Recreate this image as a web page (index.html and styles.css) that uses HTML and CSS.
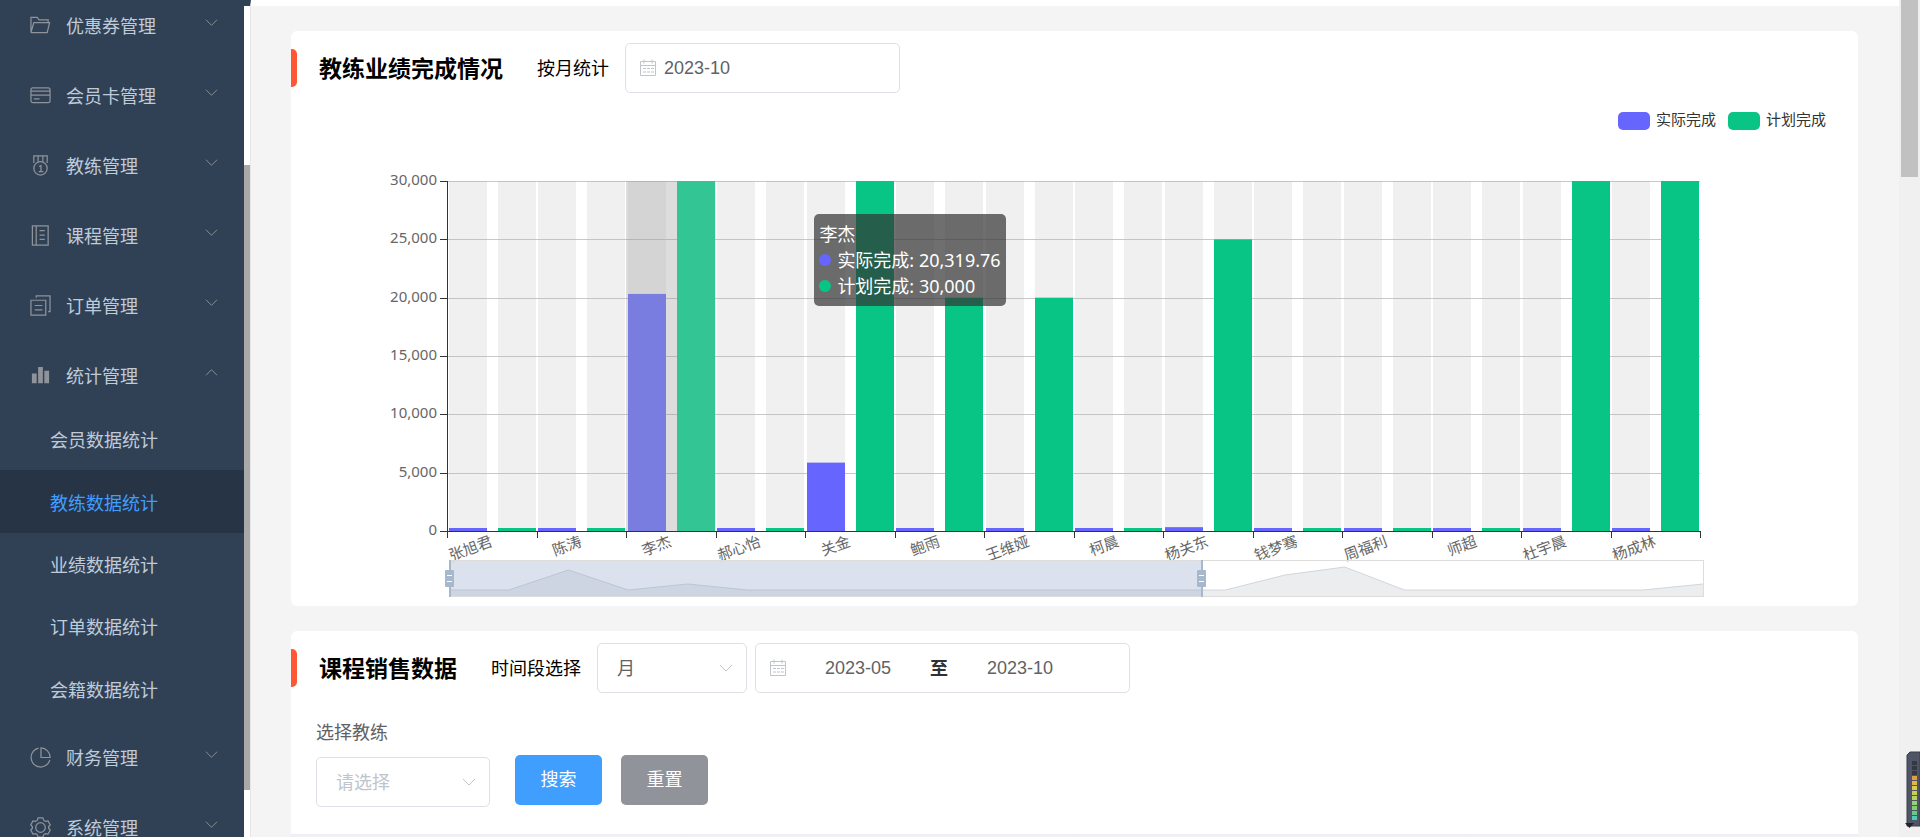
FILE: index.html
```html
<!DOCTYPE html>
<html lang="zh-CN">
<head>
<meta charset="utf-8">
<title>教练数据统计</title>
<link rel="stylesheet" href="styles.css">
</head>
<body>
<svg class="sprite" aria-hidden="true">
  <symbol id="down" viewBox="0 0 14 14"><path d="M1 4l6 6 6-6"/></symbol>
  <symbol id="up" viewBox="0 0 14 14"><path d="M1 10l6-6 6 6"/></symbol>
  <symbol id="calendar" viewBox="0 0 18 18"><path d="M1.500 2.500h15v14h-15zM1.500 6.500h15M5 .5v4M13 .5v4"/><path stroke-dasharray="3 1" d="M4 9.500h11M4 13h11"/></symbol>
</svg>
<div class="app">
  <aside class="sidebar">
    <nav class="menu">
      <a class="item" href="#"><svg class="icon" viewBox="0 0 22 22"><path d="M1 18.500V2.500h6.500l2 2.500h9.500v3M1 18.500h17l2.500-10.500h-16.500L1.300 17.500"/></svg>优惠券管理<svg class="arrow"><use href="#down"/></svg></a>
      <a class="item" href="#"><svg class="icon" viewBox="0 0 22 22"><rect x="1" y="3" width="20" height="15.500" rx="2"/><path d="M1 6.500h20M1 10.500h20M4 14.500h6"/></svg>会员卡管理<svg class="arrow"><use href="#down"/></svg></a>
      <a class="item" href="#"><svg class="icon" viewBox="0 0 22 22"><circle cx="11" cy="14" r="7"/><path d="M4 8.500V1h14v7.500M8.500 1v6M13.500 1v6M9.500 12l2-1v6M9 17.300h5"/></svg>教练管理<svg class="arrow"><use href="#down"/></svg></a>
      <a class="item" href="#"><svg class="icon" viewBox="0 0 22 22"><path d="M2.500 1h16.500v20H2.500zM6.500 1v20M10 6h5.500M10 10.500h5.500M10 15h5.500"/></svg>课程管理<svg class="arrow"><use href="#down"/></svg></a>
      <a class="item" href="#"><svg class="icon" viewBox="0 0 22 22"><path d="M1 5.500h15.500V21H1zM5 11h8M5 15.500h8M6.500 3V1H21v16.500h-2"/></svg>订单管理<svg class="arrow"><use href="#down"/></svg></a>
      <a class="item" href="#"><svg class="icon solid" viewBox="0 0 22 22"><path d="M2 9h5v10H2zM8.500 2h5v17h-5zM15 6h5v13h-5z"/></svg>统计管理<svg class="arrow"><use href="#up"/></svg></a>
      <div class="submenu">
        <a href="#">会员数据统计</a>
        <a class="active" href="#">教练数据统计</a>
        <a href="#">业绩数据统计</a>
        <a href="#">订单数据统计</a>
        <a href="#">会籍数据统计</a>
      </div>
      <a class="item" href="#"><svg class="icon" viewBox="0 0 22 22"><path d="M9 1.200A10 10 0 1 0 20.800 13.500M11.500 1v10H21A9.700 9.700 0 0 0 11.500 1z"/></svg>财务管理<svg class="arrow"><use href="#down"/></svg></a>
      <a class="item" href="#"><svg class="icon" viewBox="0 0 22 22"><circle cx="11" cy="11" r="5"/><path d="M8.500 1h5l1 2.600 1.600 1 2.800-.5 2.300 4.200-1.700 2v1.400l1.700 2-2.300 4.200-2.800-.5-1.600 1-1 2.600h-5l-1-2.600-1.600-1-2.800.5L.8 13.700l1.700-2v-1.400l-1.700-2L3.100 4.100l2.800.5 1.600-1z"/></svg>系统管理<svg class="arrow"><use href="#down"/></svg></a>
    </nav>
    <div class="side-track"><div class="side-thumb"></div></div>
  </aside>

  <main class="main">
    <section class="card">
      <header class="head">
        <h2>教练业绩完成情况</h2>
        <label for="month">按月统计</label>
        <div class="field month">
          <svg class="cal"><use href="#calendar"/></svg>
          <input id="month" type="text" value="2023-10">
        </div>
      </header>
      <div class="chart">
        <svg id="chart" viewBox="0 0 1567 513" role="img" aria-label="教练业绩完成情况"></svg>
        <div class="tooltip">
          <div>李杰</div>
          <div class="row"><i class="dot actual"></i>实际完成: 20,319.76</div>
          <div class="row"><i class="dot plan"></i>计划完成: 30,000</div>
        </div>
      </div>
    </section>

    <section class="card">
      <header class="head">
        <h2>课程销售数据</h2>
        <label for="period">时间段选择</label>
        <div class="select period">
          <select id="period"><option>月</option></select>
          <svg class="caret"><use href="#down"/></svg>
        </div>
        <div class="field range">
          <svg class="cal"><use href="#calendar"/></svg>
          <input type="text" value="2023-05" aria-label="开始月份">
          <b>至</b>
          <input type="text" value="2023-10" aria-label="结束月份">
        </div>
      </header>
      <form class="filter">
        <label for="coach">选择教练</label>
        <div class="controls">
          <div class="select coach">
            <select id="coach"><option>请选择</option></select>
            <svg class="caret"><use href="#down"/></svg>
          </div>
          <button class="btn primary" type="button">搜索</button>
          <button class="btn" type="button">重置</button>
        </div>
      </form>
      <table class="table"><thead><tr><th></th><th></th><th></th><th></th></tr></thead></table>
    </section>
  </main>

  <div class="page-track"><div class="page-thumb"></div></div>
</div>
<svg class="meter" width="15" height="77" viewBox="0 0 15 77" id="meter" aria-hidden="true"></svg>
<script src="script.js"></script>
</body>
</html>
```
FILE: styles.css
```css
* { box-sizing: border-box; }
body {
  margin: 0;
  height: 100vh;
  overflow: hidden;
  background: #f4f4f4;
  color: #000;
  font: 18px/26px "Noto Sans", "Noto Sans CJK SC", sans-serif;
}
.sprite { display: none; }
svg { fill: none; stroke: currentColor; }
input, select, button { font: inherit; color: inherit; margin: 0; }

.app { display: flex; height: 100vh; }

/* sidebar */
.sidebar {
  display: flex;
  flex: none;
  width: 251px;
  background: #304156;
  border-right: 1px solid #e6e6e6;
  border-top: 6px solid #304156;
  overflow: hidden;
}
.menu { flex: 1; margin-top: -18px; }
.menu a { color: #bfcbd9; text-decoration: none; }
.item {
  display: flex;
  align-items: center;
  height: 70px;
  padding: 5px 26px 0 30px;
}
.icon { width: 21px; height: 21px; margin-right: 15px; color: #909399; stroke-width: 1.3; }
.solid { fill: currentColor; stroke: none; }
.arrow { width: 13px; height: 13px; margin: 0 0 7px auto; color: #909399; }
.submenu { display: grid; grid-auto-rows: 1fr; height: 312px; }
.submenu a { display: flex; align-items: center; padding: 2px 0 0 50px; }
.submenu .active { background: #273445; color: #409eff; }
.side-track { width: 6px; background: #fff; }
.side-thumb { height: 625px; margin-top: 159px; background: #a9a9a9; }

/* content */
.main {
  flex: 1;
  min-width: 0;
  border-top: 6px solid #fff;
  padding: 25px 41px 0 40px;
  overflow: hidden;
}
.card { background: #fff; border-radius: 6px; padding-top: 12px; margin-bottom: 25px; overflow: hidden; }
.head { display: flex; align-items: center; height: 50px; }
.head::before {
  content: "";
  width: 6px;
  height: 38px;
  margin-right: 22px;
  background: #ff5733;
  border-radius: 0 5px 5px 0;
}
.head h2 { margin: 0 34px 0 0; font-size: 23px; font-weight: 700; }
.head label { margin-right: 16px; }
.field, .select { height: 50px; background: #fff; border: 1px solid #dcdfe6; border-radius: 5px; color: #606266; }
.field { display: flex; align-items: center; padding: 0 13px; }
.field input { border: 0; padding: 0; outline: 0; background: none; font-family: "Liberation Sans", sans-serif; min-width: 0; }
.cal { width: 18px; height: 18px; color: #c0c4cc; }
.month { width: 275px; }
.month input { width: 200px; margin-left: 7px; }
.range { width: 375px; margin-left: 8px; }
.range input { width: 142px; text-align: center; }
.range b { width: 20px; text-align: center; color: #303133; }
.select { position: relative; }
.select select { width: 100%; height: 100%; padding: 0 19px; border: 0; background: none; appearance: none; outline: 0; }
.caret { position: absolute; right: 13px; top: 17px; width: 14px; height: 14px; color: #c0c4cc; pointer-events: none; }
.period { width: 150px; }
.coach { width: 174px; color: #c0c4cc; margin: 2px 25px 0 0; }

.filter { padding: 26px 25px 27px; }
.filter label { display: block; color: #606266; }
.controls { display: flex; align-items: flex-start; padding-top: 10px; }
.btn {
  width: 87px;
  height: 50px;
  margin-right: 19px;
  padding: 0 0 3px;
  border: 0;
  border-radius: 5px;
  background: #909399;
  color: #fff;
}
.primary { background: #409eff; }
.table { width: 100%; border-collapse: collapse; table-layout: fixed; }
.table th { height: 60px; background: #f2f2f4; border: 1px solid #ebeef5; }

/* chart */
.chart { position: relative; }
.chart svg { display: block; width: 100%; stroke: none; }
.chart text { font-size: 15px; fill: #666; }
.chart .legend { fill: #333; }
.tooltip {
  position: absolute;
  left: 33.4%;
  top: 121px;
  padding: 7px 5px;
  border-radius: 5px;
  background: rgba(50, 50, 50, .7);
  color: #fff;
  white-space: nowrap;
}
.row { display: flex; align-items: center; }
.dot { width: 12px; height: 12px; margin-right: 6px; border-radius: 50%; }
.actual { background: #6666ff; }
.plan { background: #09c585; }

.page-track { width: 21px; padding: 0 2px; background: #f0f0f0; }
.page-thumb { height: 177px; background: #c1c1c1; }
.meter { position: absolute; right: 0; bottom: 9px; stroke: none; }
```
FILE: script.js
```js
const NS = 'http://www.w3.org/2000/svg';
const add = (root, tag, attrs, text) => {
  const el = document.createElementNS(NS, tag);
  for (const k in attrs) el.setAttribute(k, attrs[k]);
  if (text) el.textContent = text;
  root.appendChild(el);
};

const coaches = [
  ['张旭君', 0, 0], ['陈涛', 0, 0], ['李杰', 20319.76, 30000], ['郝心怡', 0, 0],
  ['关金', 5860, 30000], ['鲍雨', 0, 20000], ['王维娅', 0, 20000], ['柯晨', 0, 0],
  ['杨关东', 330, 25000], ['钱梦骞', 0, 0], ['周福利', 0, 0], ['师超', 0, 0],
  ['杜宇晨', 0, 30000], ['杨成林', 0, 30000]
];
const svg = document.getElementById('chart');
const plot = { left: 156, top: 88, width: 1253, height: 350 };
const base = plot.top + plot.height;
const band = plot.width / coaches.length;
const barWidth = 38;
const rect = (x, y, width, height, fill, rx = 0) => add(svg, 'rect', { x, y, width, height, fill, rx });

[['实际完成', '#6666ff', 1327], ['计划完成', '#09c585', 1437]].forEach(([name, color, x]) => {
  rect(x, 19, 32, 18, color, 5);
  add(svg, 'text', { x: x + 38, y: 32, class: 'legend' }, name);
});

for (let v = 0; v <= 30000; v += 5000) {
  const y = Math.round(base - v / 30000 * plot.height);
  if (v) rect(plot.left, y, plot.width, 1, '#c8c8c8');
  rect(plot.left - 7, y, 7, 1, '#333');
  add(svg, 'text', { x: 146, y: y + 4, 'text-anchor': 'end' }, v.toLocaleString('en-US'));
}

coaches.forEach(([name, actual, plan], i) => {
  const x = plot.left + i * band;
  const hovered = name === '李杰';
  if (hovered) rect(x, plot.top, band, plot.height, 'rgba(150,150,150,.32)');
  [[actual, hovered ? '#797ddf' : '#6666ff', 2], [plan, hovered ? '#33c594' : '#09c585', 51]].forEach(([value, color, dx]) => {
    const h = Math.max(3, value / 30000 * plot.height);
    const left = Math.floor(x + dx);
    rect(left, plot.top, barWidth, plot.height, 'rgba(180,180,180,.2)');
    rect(left, base - h, barWidth, h, color);
  });
  const cx = x + band / 2;
  add(svg, 'text', { x: cx, y: 453, 'text-anchor': 'end', transform: `rotate(-20 ${cx} 448)` }, name);
});
for (let i = 0; i <= coaches.length; i++) rect(Math.round(plot.left + i * band), base, 1, 7, '#333');
rect(plot.left, plot.top, 1, plot.height, '#333');
rect(plot.left, base, plot.width, 1, '#333');

/* range slider under the chart */
const zoom = { x: 158, y: 467, w: 1254, h: 37, selected: 752 };
const levels = { 2: 477, 4: 491, 14: 482, 15: 474, 21: 491 };
const points = Array.from({ length: 22 }, (_, i) => `${zoom.x + i * zoom.w / 21},${levels[i] || 497}`).join(' ');
add(svg, 'polygon', { points: `${zoom.x},504 ${points} ${zoom.x + zoom.w},504`, fill: '#ecedef' });
add(svg, 'polyline', { points, fill: 'none', stroke: '#d2d6da' });
rect(zoom.x, zoom.y, zoom.selected, zoom.h, 'rgba(135,160,195,.3)');
add(svg, 'rect', { x: zoom.x + .5, y: zoom.y + .5, width: zoom.w, height: zoom.h - 1, fill: 'none', stroke: '#dddddd' });
[zoom.x, zoom.x + zoom.selected].forEach(x => {
  rect(x, zoom.y, 2, zoom.h, '#a7b7cc');
  rect(x - 4, 477, 9, 17, '#a7b7cc', 1);
  rect(x - 2, 482, 5, 1, '#fff');
  rect(x - 2, 488, 5, 1, '#fff');
});

const meter = document.getElementById('meter');
add(meter, 'path', { d: 'M15 1H5L2 4v71h13z', fill: '#4f5566', stroke: '#3a3d47' });
['#333844', '#333844', '#333844', '#e0a040', '#e0b848', '#dccc4c', '#c8d050', '#b4d468', '#98d070', '#80cc78', '#68c88c', '#50ccac']
  .forEach((fill, i) => add(meter, 'rect', { x: 7, y: 10 + i * 5, width: 5, height: 4, fill }));
add(meter, 'path', { d: 'M0 72h9l-4.500 5z', fill: '#222' });
```
